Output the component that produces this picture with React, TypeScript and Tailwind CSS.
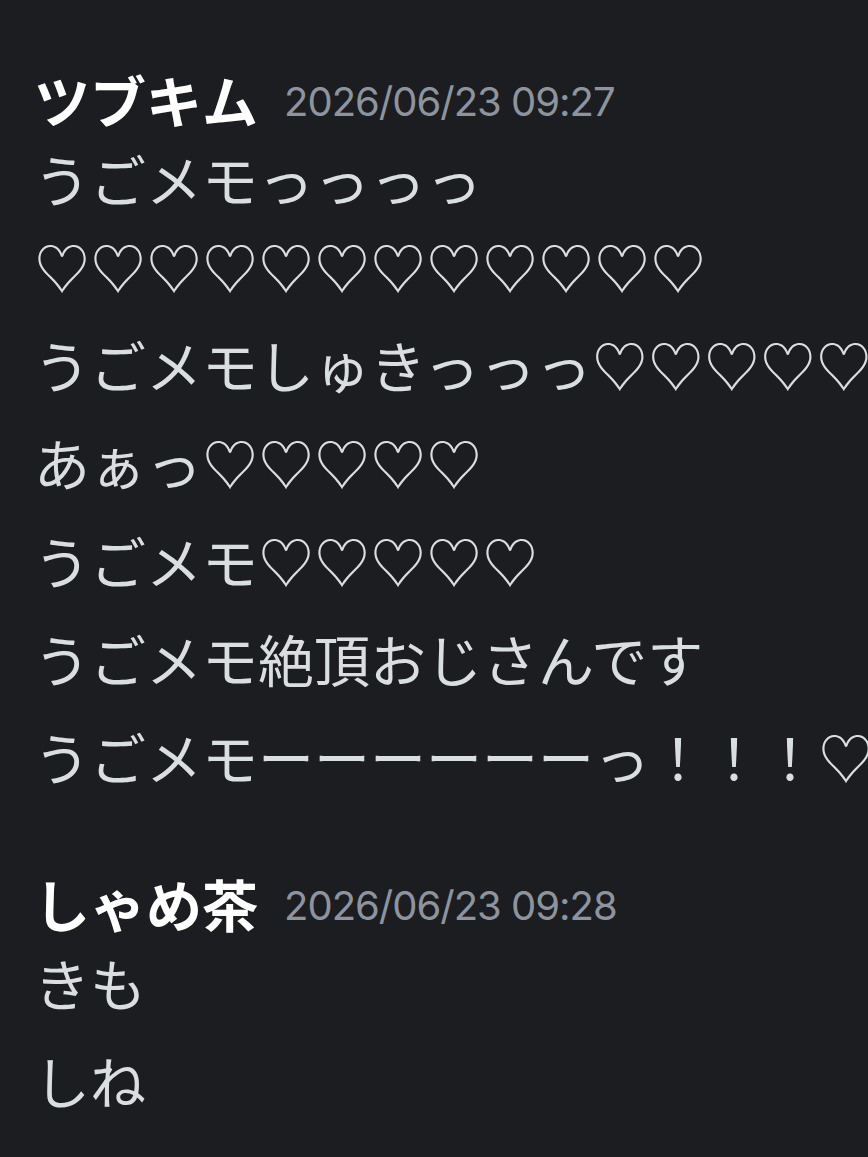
const font = { fontFamily: '"Noto Sans CJK JP", "Noto Sans", sans-serif' }

type Group = { author: string; time: string; lines: string[] }

const groups: Group[] = [
  {
    author: 'ツブキム',
    time: '2026/06/23 09:27',
    lines: [
      'うごメモっっっっ\n♡♡♡♡♡♡♡♡♡♡♡♡',
      'うごメモしゅきっっっ♡♡♡♡♡',
      'あぁっ♡♡♡♡♡',
      'うごメモ♡♡♡♡♡',
      'うごメモ絶頂おじさんです',
      'うごメモーーーーーーっ！！！♡',
    ],
  },
  {
    author: 'しゃめ茶',
    time: '2026/06/23 09:28',
    lines: ['きも', 'しね'],
  },
]

function MessageGroup({ group }: { group: Group }) {
  return (
    <div className="flex flex-col">
      <div className="flex h-[70px] items-center gap-[26px] whitespace-nowrap">
        <span className="text-[56px] leading-[70px] font-bold text-white">{group.author}</span>
        <span
          className="mt-[6px] text-[40px] leading-[70px] tracking-tight text-[#8e949d]"
          style={{ fontFamily: 'Inter, "Noto Sans", sans-serif' }}
        >
          {group.time}
        </span>
      </div>
      <div className="flex flex-col gap-[10px]">
        {group.lines.map((line, i) => (
          <p
            key={i}
            className="text-[56px] leading-[88px] text-[#dbdee1] whitespace-pre"
          >
            {line}
          </p>
        ))}
      </div>
    </div>
  )
}

export default function App() {
  return (
    <div
      className="w-[868px] h-[1157px] overflow-hidden bg-[#1c1d21] pl-[34px] pt-[64px] flex flex-col gap-[68px]"
      style={font}
    >
      {groups.map(g => (
        <MessageGroup key={g.author} group={g} />
      ))}
    </div>
  )
}
